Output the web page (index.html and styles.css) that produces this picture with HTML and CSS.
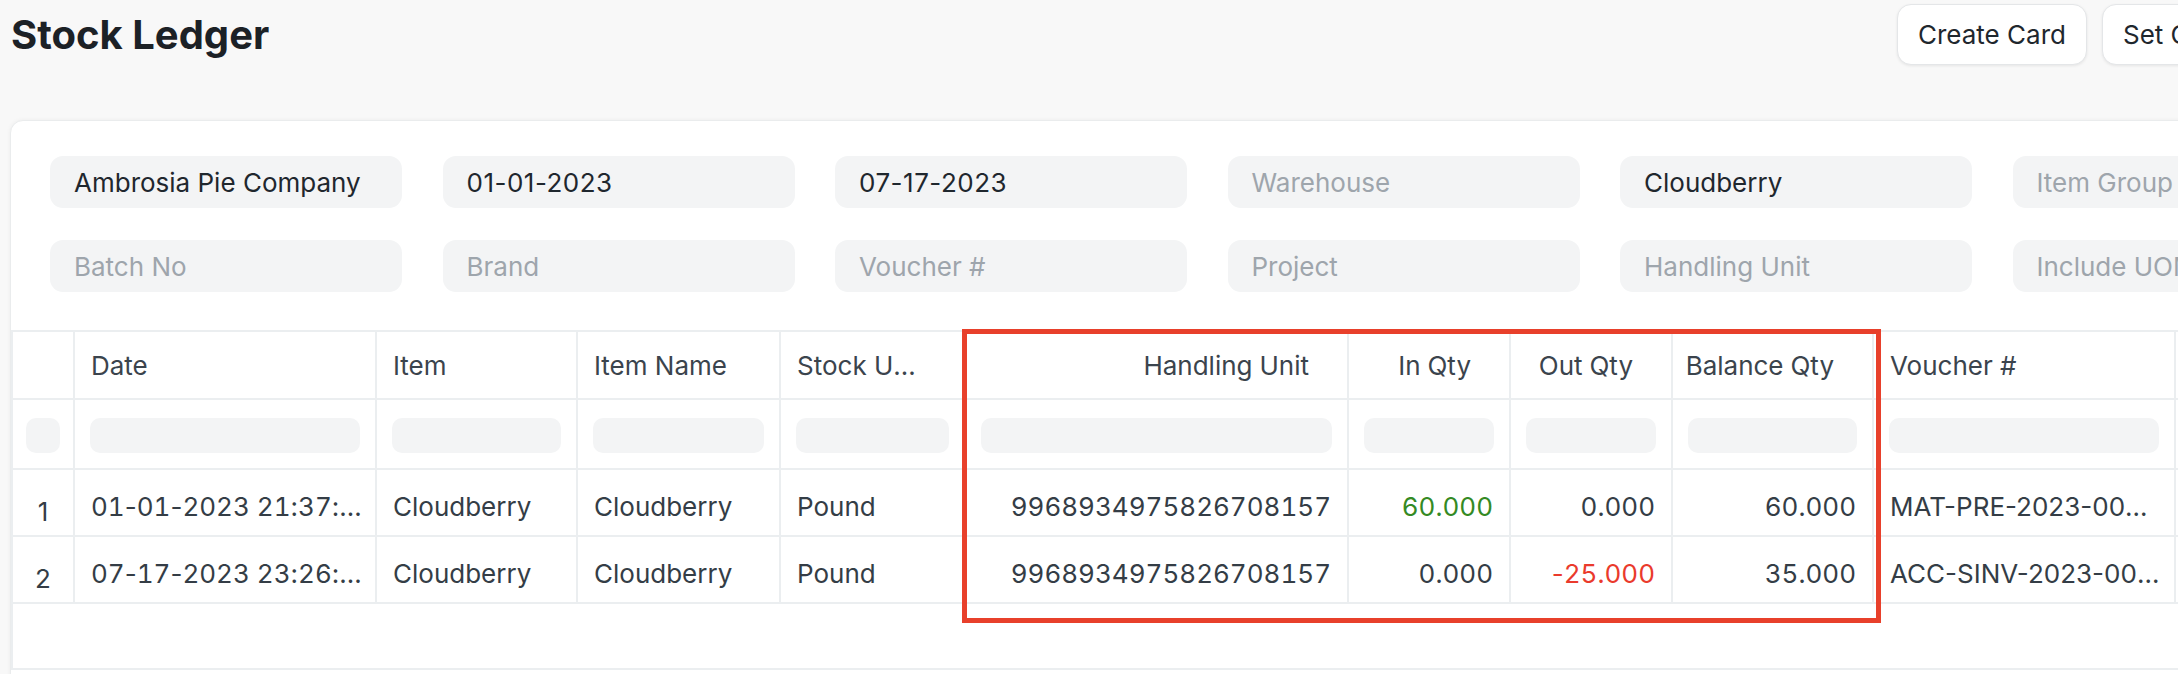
FILE: index.html
```html
<!DOCTYPE html>
<html lang="en">
<head>
<meta charset="utf-8">
<title>Stock Ledger</title>
<link rel="stylesheet" href="styles.css">
</head>
<body>
<div class="page">
  <header class="page-head">
    <h1 class="title">Stock Ledger</h1>
    <div class="actions">
      <button class="btn">Create Card</button>
      <button class="btn">Set Chart</button>
    </div>
  </header>

  <section class="card">
    <div class="filters">
      <div class="field">Ambrosia Pie Company</div>
      <div class="field date">01-01-2023</div>
      <div class="field date">07-17-2023</div>
      <div class="field placeholder">Warehouse</div>
      <div class="field">Cloudberry</div>
      <div class="field placeholder">Item Group</div>
      <div class="field placeholder">Batch No</div>
      <div class="field placeholder">Brand</div>
      <div class="field placeholder">Voucher #</div>
      <div class="field placeholder">Project</div>
      <div class="field placeholder">Handling Unit</div>
      <div class="field placeholder">Include UOM</div>
    </div>

    <div class="dt">
      <div class="dt-row dt-head">
        <div class="cell idx"></div>
        <div class="cell">Date</div>
        <div class="cell">Item</div>
        <div class="cell">Item Name</div>
        <div class="cell"><span class="trunc hd">Stock UOM</span></div>
        <div class="cell num">Handling Unit</div>
        <div class="cell num">In Qty</div>
        <div class="cell num">Out Qty</div>
        <div class="cell num">Balance Qty</div>
        <div class="cell">Voucher #</div>
        <div class="cell">Voucher Type</div>
      </div>
      <div class="dt-row dt-filter">
        <div class="cell idx"><span class="finput"></span></div>
        <div class="cell"><span class="finput"></span></div>
        <div class="cell"><span class="finput"></span></div>
        <div class="cell"><span class="finput"></span></div>
        <div class="cell"><span class="finput"></span></div>
        <div class="cell"><span class="finput"></span></div>
        <div class="cell"><span class="finput"></span></div>
        <div class="cell"><span class="finput"></span></div>
        <div class="cell"><span class="finput"></span></div>
        <div class="cell"><span class="finput"></span></div>
        <div class="cell"><span class="finput"></span></div>
      </div>
      <div class="dt-row dt-data">
        <div class="cell idx">1</div>
        <div class="cell dt-date"><span class="trunc">01<span class="hy">-</span>01<span class="hy">-</span>2023 21<span class="hy">:</span>37<span class="hy">:</span>14.512</span></div>
        <div class="cell">Cloudberry</div>
        <div class="cell">Cloudberry</div>
        <div class="cell">Pound</div>
        <div class="cell num">9968934975826708157</div>
        <div class="cell num pos">60.000</div>
        <div class="cell num">0.000</div>
        <div class="cell num">60.000</div>
        <div class="cell voucher"><span class="trunc">MAT-PRE-2023-00001</span></div>
        <div class="cell">Purchase Receipt</div>
      </div>
      <div class="dt-row dt-data">
        <div class="cell idx">2</div>
        <div class="cell dt-date"><span class="trunc">07<span class="hy">-</span>17<span class="hy">-</span>2023 23<span class="hy">:</span>26<span class="hy">:</span>41.208</span></div>
        <div class="cell">Cloudberry</div>
        <div class="cell">Cloudberry</div>
        <div class="cell">Pound</div>
        <div class="cell num">9968934975826708157</div>
        <div class="cell num">0.000</div>
        <div class="cell num neg"><span class="hy">-</span>25.000</div>
        <div class="cell num">35.000</div>
        <div class="cell voucher"><span class="trunc">ACC-SINV-2023-00001</span></div>
        <div class="cell">Sales Invoice</div>
      </div>
      <div class="dt-foot"></div>
    </div>
  </section>

  <div class="highlight"></div>
</div>
</body>
</html>
```

FILE: styles.css
```css
* { box-sizing: border-box; }

html, body {
  margin: 0;
  padding: 0;
  background: #f8f8f8;
  overflow: hidden;
}

body {
  font-family: Inter, "Noto Sans", "Liberation Sans", sans-serif;
  color: #1f272e;
  width: 2178px;
  height: 674px;
}

.page {
  position: relative;
  width: 2178px;
  height: 674px;
}

.page-head {
  display: grid;
  grid-template-columns: 1886px max-content;
  align-items: center;
  height: 68px;
  padding-left: 11px;
}

.title {
  margin: 0;
  font-size: 40px;
  font-weight: 700;
  color: #1c2126;
  white-space: nowrap;
}

.actions {
  display: flex;
  gap: 15px;
  white-space: nowrap;
}

.btn {
  font-family: inherit;
  font-size: 26px;
  color: #1f272e;
  background: #fff;
  border: 1px solid #e4e6e8;
  border-radius: 14px;
  height: 61px;
  padding: 0 20px;
  box-shadow: 0 1px 3px rgba(0, 0, 0, 0.08);
  flex: none;
  white-space: nowrap;
}

.card {
  margin: 52px 0 0 10px;
  width: 2400px;
  height: 700px;
  background: #fff;
  border: 1px solid #eaeced;
  border-radius: 13px;
  box-shadow: 0 0 4px rgba(0, 0, 0, 0.05);
}

.filters {
  display: grid;
  grid-template-columns: repeat(6, 352px);
  column-gap: 40.5px;
  row-gap: 32px;
  padding: 35px 0 0 39px;
}

.field {
  height: 52px;
  background: #f3f4f5;
  border-radius: 13px;
  padding: 0 24px;
  display: flex;
  align-items: center;
  font-size: 26px;
  color: #1f272e;
  white-space: nowrap;
  overflow: hidden;
}

.field.date {
  letter-spacing: 0.5px;
}

.field.placeholder {
  color: #9ea5ac;
}

.dt {
  margin-top: 38px;
  border-left: 2px solid #ebeef0;
  border-top: 2px solid #ebeef0;
}

.cell.num,
.cell.dt-date {
  font-variant-numeric: tabular-nums;
}

.hy {
  font-variant-numeric: normal;
}

.dt-row {
  display: grid;
  grid-template-columns: 62px 302px 201px 203px 185px 383px 162px 162px 201px 302px 300px;
  border-bottom: 2px solid #ebeef0;
}

.cell {
  border-right: 2px solid #ebeef0;
  display: flex;
  align-items: center;
  padding: 0 16px;
  font-size: 26px;
  color: #343d46;
  white-space: nowrap;
  overflow: hidden;
  min-width: 0;
}

.cell.num {
  justify-content: flex-end;
}

.dt-head {
  height: 68px;
}

.dt-head .cell {
  color: #3b444d;
}

.dt-head .cell.num {
  padding-right: 38px;
}

.dt-filter {
  height: 70px;
}

.dt-filter .cell {
  padding: 3px 15px 0;
}

.dt-filter .cell.idx {
  padding: 3px 13px 0;
}

.finput {
  display: block;
  width: 100%;
  height: 35px;
  background: #f3f4f5;
  border-radius: 10px;
}

.dt-data {
  height: 67px;
}

.dt-data .cell {
  padding-top: 7px;
}

.dt-data .cell.voucher,
.dt-data .cell.dt-date {
  padding-right: 12px;
}

.dt-data .cell.idx {
  justify-content: center;
  padding: 17px 0 0;
}

.trunc {
  display: block;
  overflow: hidden;
  text-overflow: ellipsis;
  white-space: nowrap;
  min-width: 0;
  max-width: 100%;
}

.trunc.hd {
  padding-right: 22px;
}

.pos { color: #348a24 !important; }
.neg { color: #ea3a2c !important; }

.dt-foot {
  height: 66px;
  border-bottom: 2px solid #ebeef0;
  margin-left: -2px;
}

.highlight {
  position: absolute;
  left: 962px;
  top: 329px;
  width: 919px;
  height: 294px;
  border: 5px solid #e8402b;
}
```
